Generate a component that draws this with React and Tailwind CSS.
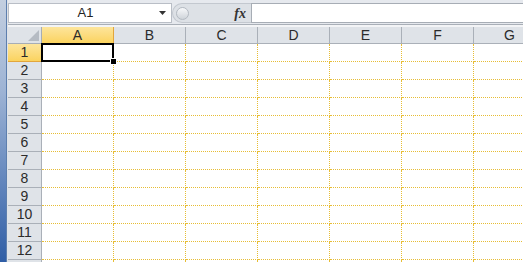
import React from 'react';

const COLS = ['A', 'B', 'C', 'D', 'E', 'F', 'G'];
const ROWS = [1, 2, 3, 4, 5, 6, 7, 8, 9, 10, 11, 12, 13];

const font = { fontFamily: '"Liberation Sans", Arial, sans-serif' };

const App = () => {
  return (
    <div className="w-[523px] h-[262px] overflow-hidden flex bg-white" style={font}>
      {/* window frame strip on the left */}
      <div className="w-[7px] shrink-0 bg-gradient-to-b from-[#c3cfe0] via-[#9db3d4] via-35% to-[#2f5ea6] border-r border-[#5d7fae]" />
      <div className="w-px shrink-0 bg-[#dfe3e8]" />

      <div className="flex-1 flex flex-col min-w-0">
        {/* Formula bar */}
        <div className="h-[27px] shrink-0 bg-[#e6e9ee] flex flex-col">
          <div className="flex h-[23px] pt-[3px]">
            {/* Name box */}
            <div className="w-[164px] h-[20px] bg-white border border-[#b9bec6] flex items-center">
              <span className="flex-1 text-center text-[13px] text-[#222] pl-[6px]">A1</span>
              <svg width="7" height="4" viewBox="0 0 7 4" className="mr-[5px] ml-[3px]">
                <path d="M0 0h7L3.5 4z" fill="#333" />
              </svg>
            </div>
            {/* splitter + fx */}
            <div className="w-[79px] h-[20px] flex items-center bg-[#dde1e6] rounded-l-full border border-r-0 border-[#c3c8cf]">
              <div className="w-[13px] h-[13px] ml-[3px] rounded-full bg-gradient-to-b from-[#f7f8fa] to-[#cfd4da] border border-[#b3b9c1]" />
              <span className="ml-auto mr-[5px] text-[14px] italic font-bold text-[#333]" style={{ fontFamily: '"Liberation Serif", serif' }}>
                fx
              </span>
            </div>
            {/* Formula input */}
            <div className="flex-1 h-[20px] bg-white border border-r-0 border-[#a7adb5]" />
          </div>
          <div className="h-px bg-[#a9afb7] mt-[1px]" />
          <div className="flex-1 bg-[#f3f4f6]" />
        </div>

        {/* Sheet */}
        <div className="flex-1 flex flex-col text-[#2b2b2b]">
          {/* column headers */}
          <div className="flex h-[17px] shrink-0">
            <div className="w-[34px] shrink-0 bg-[#dfe3e8] border-r border-b border-[#a7adb5] flex items-end justify-end">
              <svg width="11" height="11" viewBox="0 0 11 11" className="mr-[2px] mb-[2px]">
                <path d="M11 0v11H0z" fill="#b5bbc3" />
              </svg>
            </div>
            {COLS.map((c, i) => (
              <div
                key={c}
                className={
                  i === 0
                    ? 'w-[72px] shrink-0 flex items-center justify-center text-[14px] bg-gradient-to-b from-[#fde59b] to-[#fbd35e] border-r border-b border-[#e2a63c]'
                    : 'w-[72px] shrink-0 flex items-center justify-center text-[14px] bg-[#dfe3e8] border-r border-b border-[#aab0b8]'
                }
              >
                {c}
              </div>
            ))}
          </div>

          {ROWS.map((r) => (
            <div key={r} className="flex h-[18px] shrink-0">
              <div
                className={
                  r === 1
                    ? 'w-[34px] shrink-0 flex items-center justify-center text-[14px] bg-gradient-to-b from-[#fde59b] to-[#fbd35e] border-r border-b border-[#e2a63c]'
                    : 'w-[34px] shrink-0 flex items-center justify-center text-[14px] bg-[#dfe3e8] border-r border-b border-[#aab0b8]'
                }
              >
                {r < 13 ? r : ''}
              </div>
              {COLS.map((c, i) => (
                <div
                  key={c}
                  className="w-[72px] shrink-0 border-r border-b border-dotted border-[#e7bd35] relative"
                >
                  {r === 1 && i === 0 && (
                    <>
                      <div className="absolute -left-px -top-px w-[73px] h-[19px] border-2 border-[#000]" />
                      <div className="absolute right-[-4px] bottom-[-4px] w-[7px] h-[7px] bg-[#000] border border-white z-10" />
                    </>
                  )}
                </div>
              ))}
            </div>
          ))}
        </div>
      </div>
    </div>
  );
};

export default App;
